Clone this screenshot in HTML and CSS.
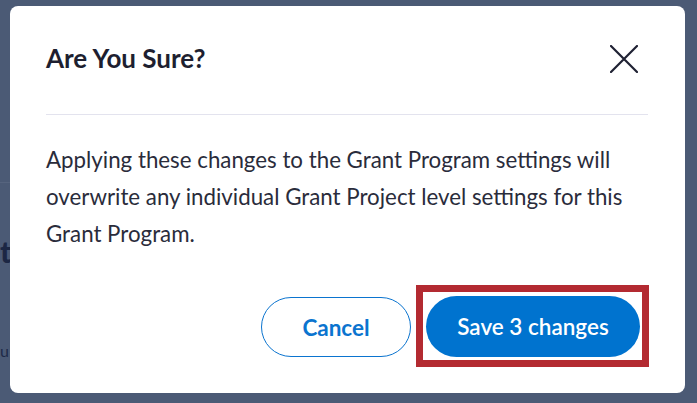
FILE: index.html
```html
<!DOCTYPE html>
<html lang="en">
<head>
<meta charset="utf-8">
<title>Are You Sure?</title>
<link rel="stylesheet" href="styles.css">
</head>
<body>
<div class="page">
  <div class="page-rule"></div>
  <div class="page-title">t</div>
  <div class="page-sub">u</div>
</div>
<div class="modal" role="dialog" aria-labelledby="modal-title">
  <div class="modal-header">
    <h2 id="modal-title" class="modal-title">Are You Sure?</h2>
    <button class="close-btn" aria-label="Close">
      <svg width="28" height="28" viewBox="0 0 28 28" aria-hidden="true">
        <path d="M1 1 L27 27 M27 1 L1 27" stroke="#1f2133" stroke-width="2.2" stroke-linecap="round" fill="none"/>
      </svg>
    </button>
  </div>
  <div class="modal-body">
    <p class="modal-text">Applying these changes to the Grant Program settings will overwrite any individual Grant Project level settings for this Grant Program.</p>
  </div>
  <div class="modal-footer">
    <button class="btn btn-secondary">Cancel</button>
    <span class="highlight-box">
      <button class="btn btn-primary">Save 3 changes</button>
    </span>
  </div>
</div>
</body>
</html>
```
FILE: styles.css
```css
html, body {
  margin: 0;
  padding: 0;
}
body {
  width: 697px;
  height: 403px;
  background: #4b5a75;
  font-family: "Lato", "Noto Sans", sans-serif;
  overflow: hidden;
  position: relative;
}
.page {
  display: flex;
  flex-direction: column;
}
.page-rule {
  margin-top: 182px;
  height: 1px;
  width: 12px;
  background: #56647e;
}
.page-title {
  margin-top: 50px;
  font-size: 30px;
  font-weight: 900;
  line-height: 36px;
  color: #1c2744;
}
.page-sub {
  margin-top: 72px;
  font-size: 16px;
  line-height: 20px;
  color: #1e2a48;
}
.modal {
  position: absolute;
  left: 10px;
  top: 6px;
  width: 675px;
  height: 387px;
  box-sizing: border-box;
  background: #ffffff;
  border-radius: 8px;
  padding: 0 37px 26px 36px;
  display: flex;
  flex-direction: column;
}
.modal-header {
  display: flex;
  align-items: center;
  justify-content: space-between;
  padding: 32px 0 35px;
  border-bottom: 1px solid #e3e3ee;
}
.modal-title {
  margin: 0;
  font-size: 26px;
  font-weight: 700;
  line-height: 41px;
  color: #1e1f30;
}
.close-btn {
  border: 0;
  background: none;
  padding: 0;
  margin-right: 10px;
  width: 28px;
  height: 28px;
  display: flex;
  cursor: pointer;
}
.modal-body {
  padding-top: 26px;
}
.modal-text {
  margin: 0;
  font-size: 22.3px;
  line-height: 37px;
  color: #2a2c3b;
}
.modal-footer {
  display: flex;
  justify-content: flex-end;
  align-items: center;
  gap: 5px;
  margin-top: auto;
  margin-right: -1px;
}
.highlight-box {
  display: flex;
  border: 7px solid #b32a31;
  padding: 4px 2px 3px 3px;
}
.btn {
  border-radius: 31px;
  font-family: "Lato", "Noto Sans", sans-serif;
  font-size: 22.5px;
  font-weight: 700;
  cursor: pointer;
  box-sizing: border-box;
}
.btn-secondary {
  width: 150px;
  height: 60px;
  margin-top: 2px;
  background: #ffffff;
  border: 1px solid #0b74cf;
  color: #0b74cf;
}
.btn-primary {
  width: 214px;
  height: 61px;
  background: #0073cf;
  border: 0;
  color: #ffffff;
  font-weight: 600;
}
```
